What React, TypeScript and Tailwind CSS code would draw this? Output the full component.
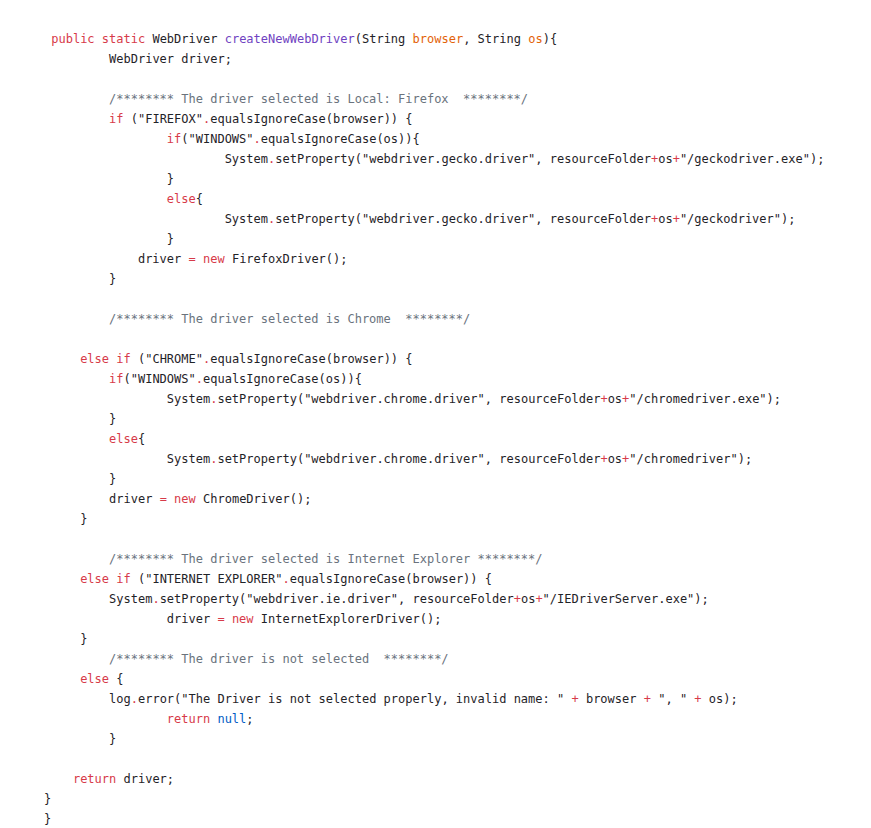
import React from 'react';

// indent (in columns) + source text for each line of the snippet
const lines: [number, string][] = [
    [1, 'public static WebDriver createNewWebDriver(String browser, String os){'],
    [9, 'WebDriver driver;'],
    [0, ''],
    [9, '/******** The driver selected is Local: Firefox  ********/'],
    [9, 'if ("FIREFOX".equalsIgnoreCase(browser)) {'],
    [17, 'if("WINDOWS".equalsIgnoreCase(os)){'],
    [25, 'System.setProperty("webdriver.gecko.driver", resourceFolder+os+"/geckodriver.exe");'],
    [17, '}'],
    [17, 'else{'],
    [25, 'System.setProperty("webdriver.gecko.driver", resourceFolder+os+"/geckodriver");'],
    [17, '}'],
    [13, 'driver = new FirefoxDriver();'],
    [9, '}'],
    [0, ''],
    [9, '/******** The driver selected is Chrome  ********/'],
    [0, ''],
    [5, 'else if ("CHROME".equalsIgnoreCase(browser)) {'],
    [9, 'if("WINDOWS".equalsIgnoreCase(os)){'],
    [17, 'System.setProperty("webdriver.chrome.driver", resourceFolder+os+"/chromedriver.exe");'],
    [9, '}'],
    [9, 'else{'],
    [17, 'System.setProperty("webdriver.chrome.driver", resourceFolder+os+"/chromedriver");'],
    [9, '}'],
    [9, 'driver = new ChromeDriver();'],
    [5, '}'],
    [0, ''],
    [9, '/******** The driver selected is Internet Explorer ********/'],
    [5, 'else if ("INTERNET EXPLORER".equalsIgnoreCase(browser)) {'],
    [9, 'System.setProperty("webdriver.ie.driver", resourceFolder+os+"/IEDriverServer.exe");'],
    [17, 'driver = new InternetExplorerDriver();'],
    [5, '}'],
    [9, '/******** The driver is not selected  ********/'],
    [5, 'else {'],
    [9, 'log.error("The Driver is not selected properly, invalid name: " + browser + ", " + os);'],
    [17, 'return null;'],
    [9, '}'],
    [0, ''],
    [4, 'return driver;'],
    [0, '}'],
    [0, '}'],
];

const KEYWORDS = ['public', 'static', 'if', 'else', 'new', 'return'];

function highlight(src: string, first: boolean) {
    if (src.startsWith('/*')) {
        return [<span key="c" className="text-[#6a737d]">{src}</span>];
    }
    const out: React.ReactNode[] = [];
    const re = /("[^"]*")|([A-Za-z_]\w*)|([.+=])|(\s+)|(.)/g;
    let m: RegExpExecArray | null;
    let i = 0;
    while ((m = re.exec(src))) {
        const [tok, str, word, op] = m;
        let cls = '';
        if (str) cls = '';
        else if (word && KEYWORDS.includes(word)) cls = 'text-[#d73a49]';
        else if (word === 'null') cls = 'text-[#005cc5]';
        else if (word === 'createNewWebDriver') cls = 'text-[#6f42c1]';
        else if (first && (word === 'browser' || word === 'os')) cls = 'text-[#e36209]';
        else if (op) cls = 'text-[#d73a49]';
        out.push(cls ? <span key={i++} className={cls}>{tok}</span> : <span key={i++}>{tok}</span>);
    }
    return out;
}

export default function App() {
    return (
        <div className="min-h-[828px] w-[871px] bg-white pt-[29px] pl-[44px]">
            <div className="flex flex-col text-[12px] leading-[20px] text-[#1f2328] font-['DejaVu_Sans_Mono',monospace] whitespace-pre">
                {lines.map(([indent, src], idx) => (
                    <div key={idx} className="h-[20px]">
                        {' '.repeat(indent)}
                        {highlight(src, idx === 0)}
                    </div>
                ))}
            </div>
        </div>
    );
}
